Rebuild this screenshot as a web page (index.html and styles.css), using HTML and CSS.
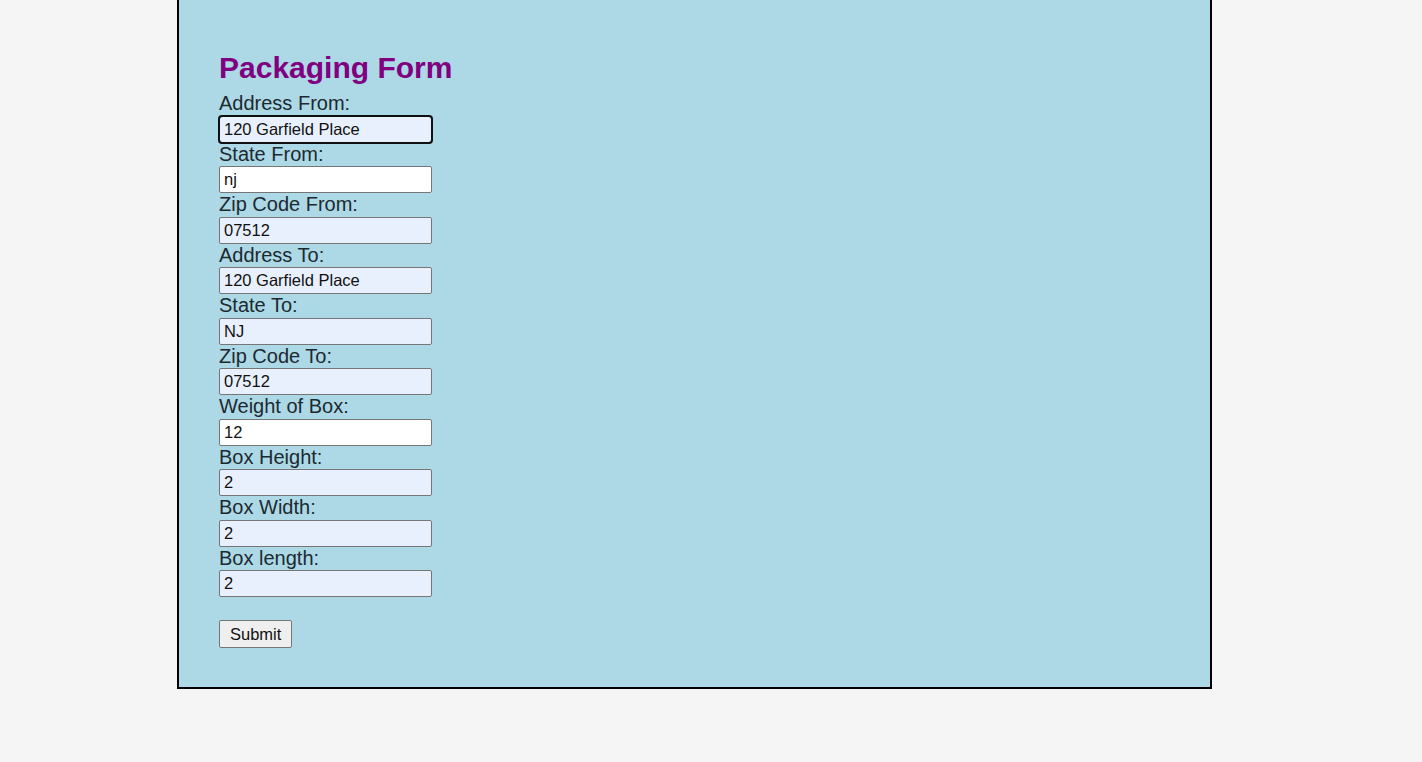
FILE: index.html
```html
<!DOCTYPE html>
<html lang="en">
<head>
<meta charset="utf-8">
<title>Packaging Form</title>
<link rel="stylesheet" href="styles.css">
</head>
<body>
<div class="container">
  <h2 class="title">Packaging Form</h2>
  <form class="form">
    <label class="label">Address From:</label>
    <input class="field autofill focused" type="text" value="120 Garfield Place">
    <label class="label">State From:</label>
    <input class="field" type="text" value="nj">
    <label class="label">Zip Code From:</label>
    <input class="field autofill" type="text" value="07512">
    <label class="label">Address To:</label>
    <input class="field autofill" type="text" value="120 Garfield Place">
    <label class="label">State To:</label>
    <input class="field autofill" type="text" value="NJ">
    <label class="label">Zip Code To:</label>
    <input class="field autofill" type="text" value="07512">
    <label class="label">Weight of Box:</label>
    <input class="field" type="text" value="12">
    <label class="label">Box Height:</label>
    <input class="field autofill" type="text" value="2">
    <label class="label">Box Width:</label>
    <input class="field autofill" type="text" value="2">
    <label class="label">Box length:</label>
    <input class="field autofill" type="text" value="2">
    <div class="actions">
      <button class="submit" type="button">Submit</button>
    </div>
  </form>
</div>
</body>
</html>
```

FILE: styles.css
```css
html, body {
  margin: 0;
  padding: 0;
}
body {
  background: #f5f5f5;
  font-family: "Liberation Sans", Arial, sans-serif;
  color: #1a1a1a;
}
.container {
  margin-left: 177px;
  width: 951px;
  background: #add8e6;
  border: 2px solid #000;
  border-top: 0;
  padding: 51px 40px 39px;
  box-sizing: content-box;
}
.title {
  margin: 0 0 6.5px;
  font-size: 30px;
  line-height: 34.5px;
  font-weight: bold;
  color: #800080;
}
.form {
  display: flex;
  flex-direction: column;
  align-items: flex-start;
}
.label {
  font-size: 20px;
  line-height: 23.5px;
  color: #1c2a30;
}
.field {
  box-sizing: border-box;
  width: 213px;
  height: 27px;
  margin: 0;
  padding: 1px 4px;
  font-family: "Liberation Sans", Arial, sans-serif;
  font-size: 16.5px;
  color: #111;
  background: #fff;
  border: 1px solid #767676;
  border-radius: 2px;
}
.field.autofill {
  background: #e8f0fe;
}
.field.focused {
  outline: 2px solid #101010;
  outline-offset: -1px;
  border-radius: 3px;
}
.actions {
  padding-top: 23px;
}
.submit {
  box-sizing: border-box;
  height: 28px;
  padding: 0 10px;
  font-family: "Liberation Sans", Arial, sans-serif;
  font-size: 16.5px;
  color: #111;
  background: #efefef;
  border: 1px solid #767676;
  border-radius: 2px;
}
```
